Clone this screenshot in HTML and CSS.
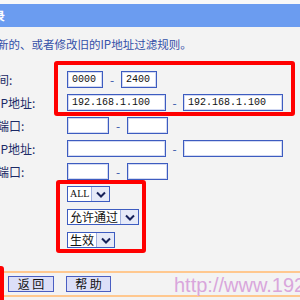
FILE: index.html
```html
<!DOCTYPE html>
<html lang="zh-CN">
<head>
<meta charset="utf-8">
<title>IP地址过滤</title>
<link rel="stylesheet" href="styles.css">
</head>
<body>
<div class="page">
  <div class="topstrip"></div>
  <div class="header">
    <div class="title-wrap"><span class="title">添加或修改IP地址过滤记录</span></div>
  </div>
  <p class="intro">本页添加新的、或者修改旧的IP地址过滤规则。</p>
  <div class="form">
    <span class="label">生效时间:</span>
    <div class="field"><input class="input w36" type="text" value="0000"><span class="dash">-</span><input class="input w36" type="text" value="2400"></div>

    <span class="label">局域网IP地址:</span>
    <div class="field"><input class="input w99" type="text" value="192.168.1.100"><span class="dash d17">-</span><input class="input w100" type="text" value="192.168.1.100"></div>

    <span class="label">局域网端口:</span>
    <div class="field"><input class="input w42" type="text" value=""><span class="dash">-</span><input class="input w41" type="text" value=""></div>

    <span class="label">广域网IP地址:</span>
    <div class="field"><input class="input w99" type="text" value=""><span class="dash d17">-</span><input class="input w100" type="text" value=""></div>

    <span class="label">广域网端口:</span>
    <div class="field"><input class="input w42" type="text" value=""><span class="dash">-</span><input class="input w41" type="text" value=""></div>

    <span class="label">协议:</span>
    <div class="field">
      <div class="select"><span class="select-text latin">ALL</span><span class="select-btn"><svg width="10" height="7" viewBox="0 0 10 7"><path d="M1 1.5 L5 5.5 L9 1.5" fill="none" stroke="#16215a" stroke-width="2"/></svg></span></div>
    </div>

    <span class="label">通过:</span>
    <div class="field">
      <div class="select"><span class="select-text">允许通过</span><span class="select-btn"><svg width="10" height="7" viewBox="0 0 10 7"><path d="M1 1.5 L5 5.5 L9 1.5" fill="none" stroke="#16215a" stroke-width="2"/></svg></span></div>
    </div>

    <span class="label">状态:</span>
    <div class="field">
      <div class="select"><span class="select-text">生效</span><span class="select-btn"><svg width="10" height="7" viewBox="0 0 10 7"><path d="M1 1.5 L5 5.5 L9 1.5" fill="none" stroke="#16215a" stroke-width="2"/></svg></span></div>
    </div>
  </div>

  <div class="footer">
    <button class="btn" type="button">返 回</button>
    <button class="btn w45" type="button">帮 助</button>
  </div>

  <div class="mark mark1"></div>
  <div class="mark mark2"></div>
  <div class="mark mark3"></div>
  <div class="watermark">http://www.192</div>
</div>
</body>
</html>
```

FILE: styles.css
```css
html, body {
  margin: 0;
  padding: 0;
  overflow: hidden;
}

body {
  width: 300px;
  height: 300px;
  background: #f3f3f3;
  font-family: "Noto Sans CJK SC", "Noto Sans", sans-serif;
}

.page {
  position: relative;
  width: 300px;
  height: 300px;
  overflow: hidden;
}

.topstrip {
  height: 4px;
  background: #f8f8f8;
}

.header {
  height: 23px;
  background: #6b9cf0;
  display: flex;
  align-items: center;
}

.title-wrap {
  width: 5px;
  display: flex;
  justify-content: flex-end;
}

.title {
  flex-shrink: 0;
  white-space: nowrap;
  color: #ffffff;
  font-size: 12px;
  font-weight: bold;
  line-height: 14px;
}

.intro {
  margin: 10px 0 0 -49px;
  font-size: 11.5px;
  line-height: 14px;
  color: #3350a8;
  white-space: nowrap;
}

.form {
  margin: 19.5px 0 0 -39px;
  display: grid;
  grid-template-columns: 106px auto;
  grid-auto-rows: 17px;
  row-gap: 6px;
  align-items: center;
}

.label {
  font-size: 12px;
  line-height: 17px;
  color: #1c2a66;
  white-space: nowrap;
}

.field {
  display: flex;
  align-items: center;
  height: 17px;
}

.input {
  box-sizing: border-box;
  height: 17px;
  margin: 0;
  padding: 0 0 0 4px;
  border: 1px solid #3d5cc0;
  box-shadow: inset 0 0 0 1px #d2d9f2;
  background: #ffffff;
  font-family: "Liberation Mono", monospace;
  font-size: 10px;
  color: #111111;
  outline: none;
}

.w36 { width: 36px; }
.w41 { width: 41px; }
.w42 { width: 42px; }
.w99 { width: 99px; }
.w100 { width: 100px; }

.dash {
  width: 18px;
  text-align: center;
  color: #3355aa;
  font-size: 12px;
  line-height: 17px;
}

.dash.d17 { width: 17px; }

.select {
  display: flex;
  box-sizing: border-box;
  height: 16px;
  border: 1px solid #3d5cc0;
  background: #ffffff;
}

.select-text {
  padding: 0 2px;
  font-size: 12px;
  line-height: 14px;
  color: #111111;
  white-space: nowrap;
}

.select-text.latin {
  font-family: "Liberation Serif", serif;
  font-size: 10px;
}

.select-btn {
  width: 17px;
  display: flex;
  align-items: center;
  justify-content: center;
  background: #e6eaf8;
  border-left: 1px solid #9fb0e0;
}

.footer {
  margin-top: 22.5px;
  height: 22px;
  padding-left: 8px;
  border-top: 2px solid #ffc88f;
  border-bottom: 2px solid #ffc88f;
  display: flex;
  align-items: center;
  gap: 12px;
}

.btn {
  box-sizing: border-box;
  width: 46px;
  height: 16px;
  margin: 0;
  padding: 0;
  border: 1px solid #4a5ec2;
  background: #dcdff8;
  font-family: "Noto Sans CJK SC", sans-serif;
  font-size: 12px;
  line-height: 14px;
  color: #111111;
}

.btn.w45 { width: 45px; }

.mark {
  position: absolute;
  box-sizing: border-box;
  border: 4px solid #ff0000;
  border-radius: 3px;
}

.mark1 { left: 54px; top: 61px; width: 241px; height: 55px; }
.mark2 { left: 56px; top: 180px; width: 90px; height: 73px; }
.mark3 { left: -12px; top: 266px; width: 16px; height: 50px; }

.watermark {
  position: absolute;
  left: 174px;
  top: 275px;
  font-family: "Liberation Sans", Arial, sans-serif;
  font-size: 20px;
  line-height: 20px;
  color: #d9a6dc;
  white-space: nowrap;
}
```
